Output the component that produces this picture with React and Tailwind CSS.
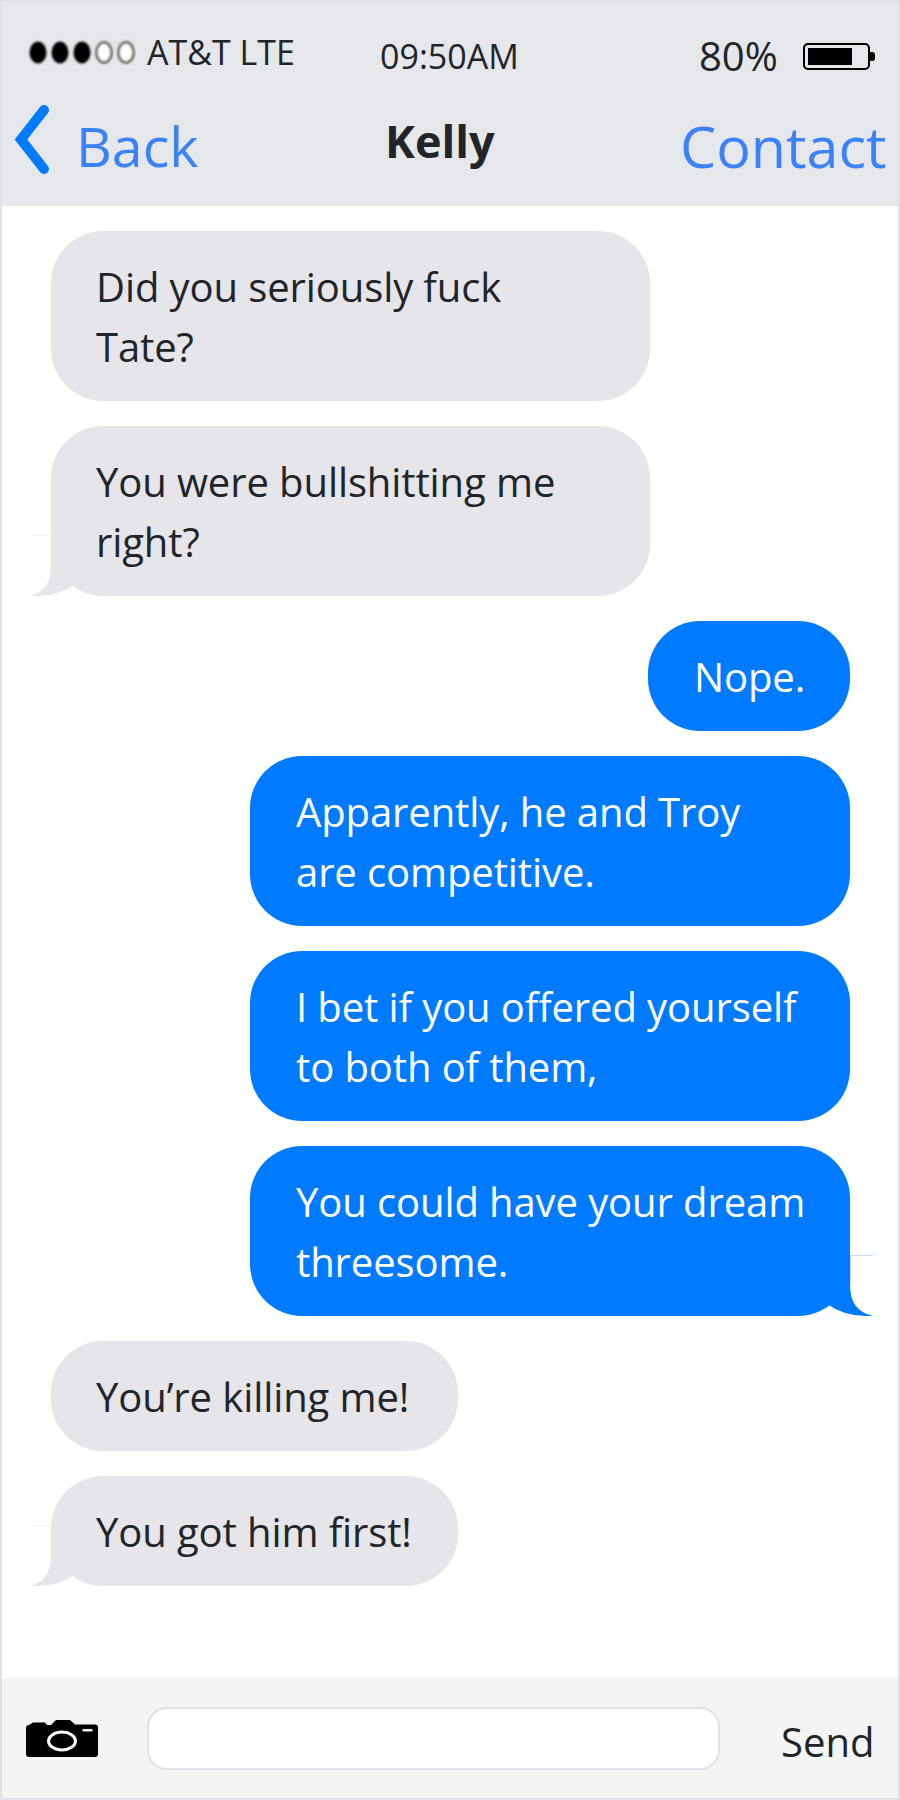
import React from 'react';

const messages = [
  { from: 'them', w: 'w-[599px]', lines: ['Did you seriously fuck', 'Tate?'] },
  { from: 'them', w: 'w-[599px]', tail: true, lines: ['You were bullshitting me', 'right?'] },
  { from: 'me', w: 'w-[202px]', lines: ['Nope.'] },
  { from: 'me', w: 'w-[600px]', lines: ['Apparently, he and Troy', 'are competitive.'] },
  { from: 'me', w: 'w-[600px]', lines: ['I bet if you offered yourself', 'to both of them,'] },
  { from: 'me', w: 'w-[600px]', tail: true, lines: ['You could have your dream', 'threesome.'] },
  { from: 'them', w: 'w-[407px]', lines: ['You’re killing me!'] },
  { from: 'them', w: 'w-[407px]', tail: true, lines: ['You got him first!'] },
];

const SignalDots = () => (
  <svg width="112" height="31" viewBox="0 0 112 31" className="shrink-0">
    <defs>
      <filter id="soft" x="-20%" y="-20%" width="140%" height="140%">
        <feGaussianBlur stdDeviation="1.200" />
      </filter>
    </defs>
    <g filter="url(#soft)">
      <ellipse cx="14" cy="15.500" rx="8.500" ry="11" fill="#000" />
      <ellipse cx="36" cy="15.500" rx="8.500" ry="11" fill="#000" />
      <ellipse cx="58" cy="15.500" rx="8.500" ry="11" fill="#000" />
      <ellipse cx="80" cy="15.500" rx="7.500" ry="10" fill="#fff" stroke="#555" strokeWidth="2.500" />
      <ellipse cx="102" cy="15.500" rx="7.500" ry="10" fill="#fff" stroke="#555" strokeWidth="2.500" />
    </g>
  </svg>
);

const Battery = () => (
  <svg width="72" height="27" viewBox="0 0 72 27" className="shrink-0">
    <rect x="1" y="1" width="65" height="25" rx="4" fill="none" stroke="#000" strokeWidth="2" />
    <rect x="5" y="5" width="44" height="17" fill="#000" />
    <path d="M67 9h2a3 3 0 0 1 3 3v3a3 3 0 0 1-3 3h-2z" fill="#000" />
  </svg>
);

const Chevron = () => (
  <svg width="38" height="71" viewBox="0 0 38 71" className="shrink-0">
    <path d="M31 6 8 35.500 31 65" fill="none" stroke="#007bff" strokeWidth="10" strokeLinecap="round" strokeLinejoin="miter" />
  </svg>
);

const Camera = () => (
  <svg width="72" height="37" viewBox="0 0 72 37" className="shrink-0">
    <path
      fill="#000"
      d="M3 5 7 2.500h12L21 5h4L30 0h14l5 4.500h20a3 3 0 0 1 3 3V34a3 3 0 0 1-3 3H3a3 3 0 0 1-3-3V8a3 3 0 0 1 3-3Z"
    />
    <ellipse cx="36" cy="21" rx="13.500" ry="9" fill="none" stroke="#fff" strokeWidth="3" />
    <rect x="56.500" y="9" width="10" height="2.500" rx="1.200" fill="#fff" />
  </svg>
);

const Tail = ({ side }) =>
  side === 'left' ? (
    <svg width="60" height="61" viewBox="0 0 60 61" className="absolute left-[-21px] bottom-0">
      <path d="M21 .5H0" stroke="#f5f5f6" strokeWidth="1" />
      <path d="M21 0V30Q21 56 0 61Q28 62 44 50L44 0Z" fill="#e5e5ea" />
    </svg>
  ) : (
    <svg width="60" height="61" viewBox="0 0 60 61" className="absolute right-[-23px] bottom-0">
      <path d="M37 .5H60" stroke="#bfdcff" strokeWidth="1" />
      <path d="M37.500 1V30" stroke="#bfdcff" strokeWidth="1" />
      <path d="M37 0V30Q37 56 60 61Q32 62 14 49L14 0Z" fill="#007bff" />
    </svg>
  );

const Bubble = ({ from, w, tail, lines }) => {
  const mine = from === 'me';
  return (
    <div
      className={`relative ${w} rounded-[52px] pb-[24px] pt-[26px] text-[40px] leading-[60px] tracking-[-0.1px] whitespace-nowrap ${
        mine ? 'self-end bg-[#007bff] pl-[46px] text-white' : 'self-start bg-[#e5e5ea] pl-[45px] text-[#212529]'
      }`}
    >
      {lines.map((line) => (
        <div key={line}>{line}</div>
      ))}
      {tail && <Tail side={mine ? 'right' : 'left'} />}
    </div>
  );
};

export default function App() {
  return (
    <div
      className="flex h-[1800px] w-[900px] flex-col border-2 border-[#dee2e6] bg-white text-[#212529]"
      style={{ fontFamily: '"Open Sans", sans-serif' }}
    >
      <header className="h-[204px] shrink-0 bg-[#e6e7eb]">
        <div className="flex h-[102px] items-start pt-[30px]">
          <div className="flex w-[378px] items-center pl-[22px]">
            <SignalDots />
            <span className="ml-[11px] text-[34px] leading-[40px]">AT&amp;T LTE</span>
          </div>
          <span className="mt-[2px] w-[319px] text-[34px] leading-[44px]">09:50AM</span>
          <span className="mt-[-1px] text-[40px] leading-[50px]">80%</span>
          <div className="ml-[25px] mt-[11px]">
            <Battery />
          </div>
        </div>
        <div className="flex items-start">
          <div className="ml-[11px]">
            <Chevron />
          </div>
          <span className="ml-[25px] mt-[6px] w-[308px] text-[55.500px] leading-[72px] text-[#3b82f6]">Back</span>
          <span className="ml-[1px] mt-[1px] w-[295px] text-[45px] font-bold leading-[72px]">Kelly</span>
          <span className="mt-[6px] text-[57.500px] leading-[72px] text-[#3b82f6]">Contact</span>
        </div>
      </header>

      <main className="flex flex-1 flex-col gap-[25px] pl-[49px] pr-[48px] pt-[25px]">
        {messages.map((m) => (
          <Bubble key={m.lines[0]} {...m} />
        ))}
      </main>

      <footer className="flex h-[120px] shrink-0 items-center bg-[#f4f4f4]">
        <div className="ml-[24px]">
          <Camera />
        </div>
        <div className="ml-[49px] h-[63px] w-[573px] rounded-[20px] border-2 border-[#dee2e6] bg-white" />
        <span className="ml-[61px] mt-[8px] text-[40px] leading-[60px]">Send</span>
      </footer>
    </div>
  );
}
